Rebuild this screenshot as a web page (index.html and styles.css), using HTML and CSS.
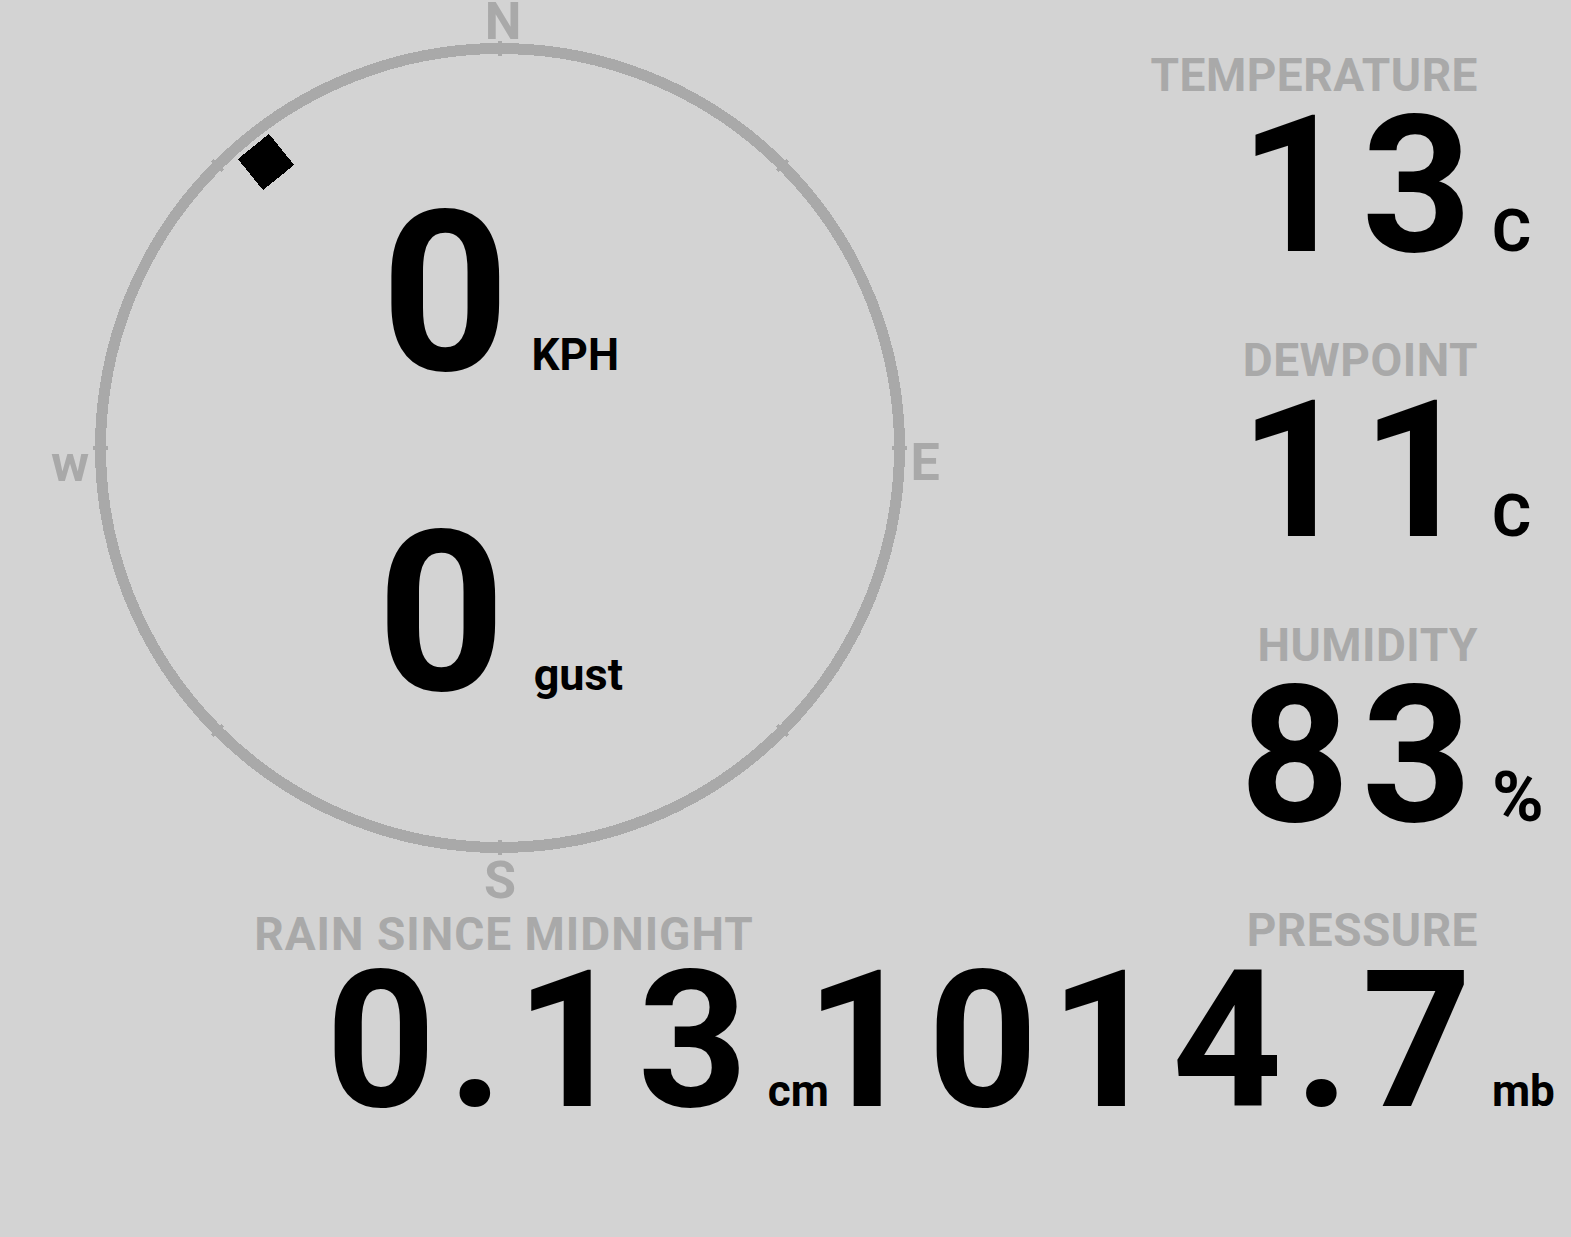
FILE: index.html
```html
<!DOCTYPE html>
<html>
	<head>
		<meta charset="utf-8" />
		<title>weather</title>
		<link rel="stylesheet" href="styles.css">
	</head>
	<body>
		<div class="dash">
			<div class="left">
				<!-- wind rose: ring, ticks, direction letters and the vane marker -->
				<div class="compass">
					<svg class="rose" width="1000" height="907" viewBox="0 0 1000 907">
						<circle class="ring" cx="500" cy="448" r="399.5" />
						<g class="ticks">
							<line x1="500" y1="41" x2="500" y2="56" />
							<line x1="500" y1="41" x2="500" y2="56" transform="rotate(45 500 448)" />
							<line x1="500" y1="41" x2="500" y2="56" transform="rotate(90 500 448)" />
							<line x1="500" y1="41" x2="500" y2="56" transform="rotate(135 500 448)" />
							<line x1="500" y1="41" x2="500" y2="56" transform="rotate(180 500 448)" />
							<line x1="500" y1="41" x2="500" y2="56" transform="rotate(225 500 448)" />
							<line x1="500" y1="41" x2="500" y2="56" transform="rotate(270 500 448)" />
							<line x1="500" y1="41" x2="500" y2="56" transform="rotate(315 500 448)" />
						</g>
						<text class="dir" x="503" y="39">N</text>
						<text class="dir" x="925" y="480">E</text>
						<text class="dir" x="500" y="898">S</text>
						<text class="dir" x="70" y="481">w</text>
						<rect class="vane" x="246" y="142" width="40" height="40" transform="rotate(-39 266 162)" />
					</svg>
					<div class="speed">
						<div class="reading">
							<span class="num">0</span>
							<span class="unit">KPH</span>
						</div>
						<div class="reading">
							<span class="num">0</span>
							<span class="unit gust">gust</span>
						</div>
					</div>
				</div>

				<div class="stat rain">
					<div class="label">RAIN SINCE MIDNIGHT</div>
					<div class="value">0.13</div>
					<div class="unit">cm</div>
				</div>
			</div>

			<div class="right">
				<div class="stat">
					<div class="label">TEMPERATURE</div>
					<div class="value">13</div>
					<div class="unit unit-lg">C</div>
				</div>
				<div class="stat">
					<div class="label">DEWPOINT</div>
					<div class="value">11</div>
					<div class="unit unit-lg">C</div>
				</div>
				<div class="stat">
					<div class="label">HUMIDITY</div>
					<div class="value">83</div>
					<div class="unit unit-pct">%</div>
				</div>
				<div class="stat">
					<div class="label">PRESSURE</div>
					<div class="value">1014.7</div>
					<div class="unit">mb</div>
				</div>
			</div>
		</div>
	</body>
</html>
```

FILE: styles.css
```css
*{
	margin: 0;
	padding: 0;
	box-sizing: border-box;
}
html,body{
	width: 100%;
	height: 100%;
}
body{
	overflow: hidden;
	background: #d3d3d3;
	color: #000;
	font-family: Roboto, "Liberation Sans", sans-serif;
	font-weight: 700;
}
.dash{
	display: grid;
	grid-template-columns: 1000px minmax(0, 1fr);
	width: 100%;
}
.left{
	display: flex;
	flex-direction: column;
	align-items: center;
}

/*compass*/
.compass{
	position: relative;
	width: 1000px;
	height: 907px;
}
.rose{
	position: absolute;
	left: 0;
	top: 0;
	shape-rendering: crispEdges;
}
.ring{
	fill: none;
	stroke: #a9a9a9;
	stroke-width: 11;
}
.ticks line{
	stroke: #a9a9a9;
	stroke-width: 4;
}
.dir{
	font-family: Roboto, "Liberation Sans", sans-serif;
	font-weight: 700;
	font-size: 52px;
	fill: #a9a9a9;
	text-anchor: middle;
}
.vane{
	fill: #000;
}
.speed{
	display: flex;
	flex-direction: column;
	gap: 120px;
	padding-top: 194px;
}
.reading{
	display: flex;
	justify-content: center;
	align-items: baseline;
}
.reading .num{
	font-size: 224px;
	line-height: 200px;
}
.reading .unit{
	margin-left: 22px;
}
.reading .gust{
	font-size: 45px;
	margin-left: 28px;
}

/*stats*/
.right{
	min-width: 0;
	display: flex;
	flex-direction: column;
	align-items: flex-end;
	gap: 65px;
	padding-top: 52px;
}
.stat{
	display: grid;
	grid-template-columns: 93px max-content 93px;
	align-items: baseline;
}
.label{
	grid-column: 2;
	justify-self: end;
	font-size: 46px;
	line-height: 46px;
	letter-spacing: 0.5px;
	color: #a9a9a9;
}
.value{
	grid-column: 2;
	justify-self: end;
	font-size: 192px;
	line-height: 172px;
	letter-spacing: 12px;
	margin: 2px -6px 0 0;
}
.stat .unit{
	grid-column: 3;
	padding-left: 14px;
}
.unit{
	font-size: 44px;
}
.unit-lg{
	font-size: 60px;
}
.unit-pct{
	font-size: 70px;
}
.rain{
	margin-left: 8px;
}
.rain .label{
	margin-top: 4px;
	letter-spacing: 1px;
}
.rain .value{
	margin-top: -2px;
}
```
